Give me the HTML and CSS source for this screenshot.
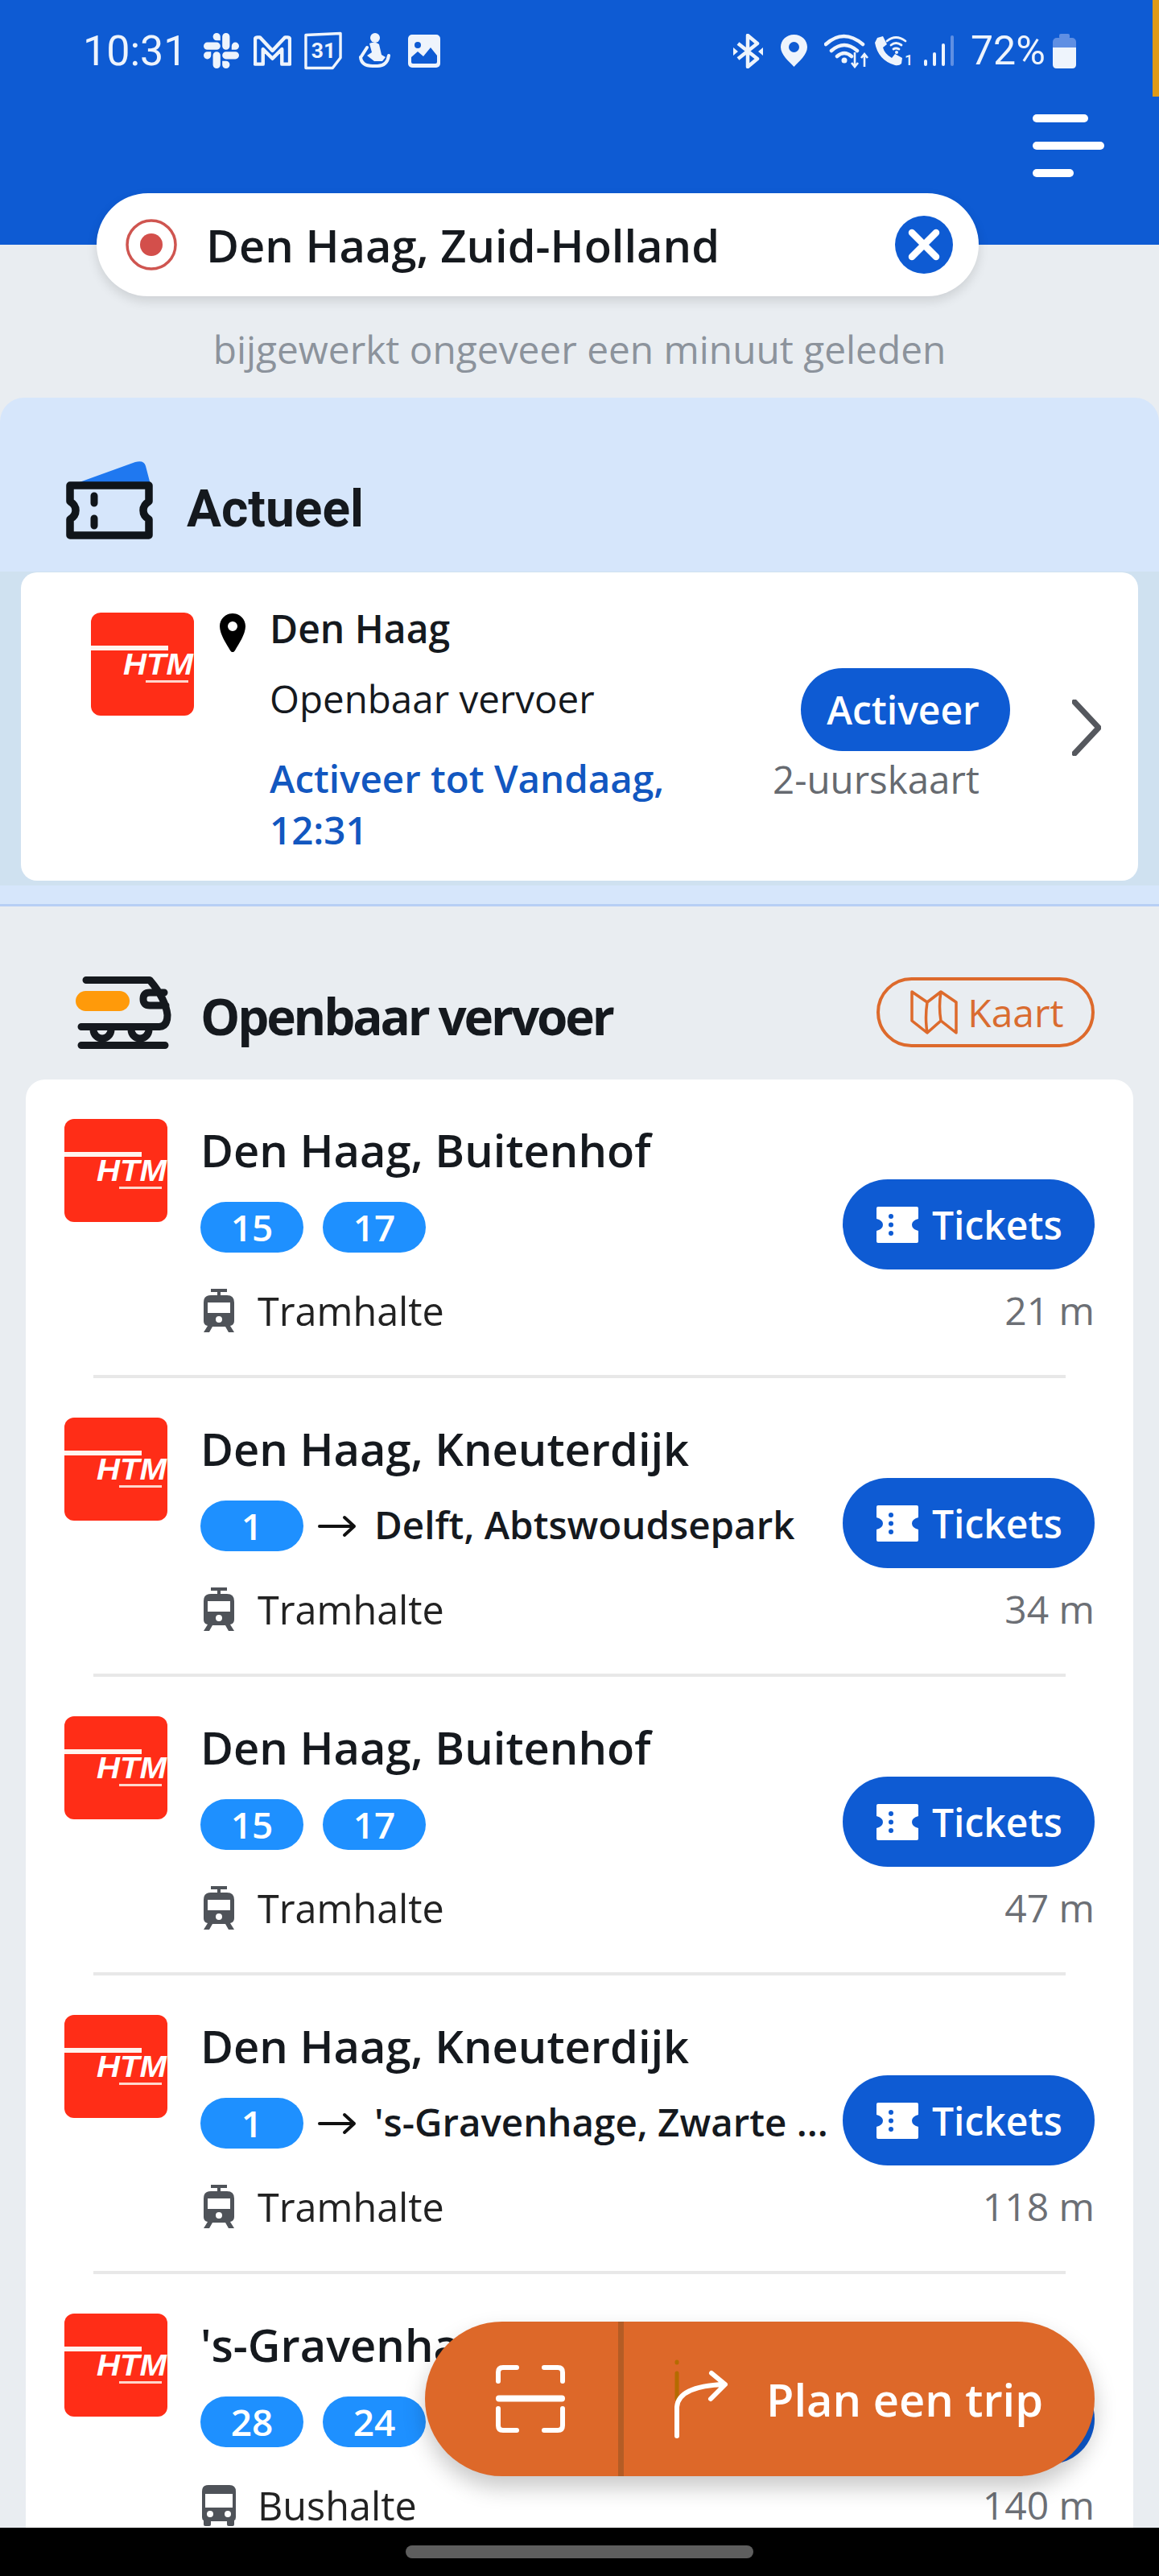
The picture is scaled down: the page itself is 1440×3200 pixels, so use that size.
FILE: index.html
```html
<!DOCTYPE html>
<html>
<head>
    <title>Reisplanner</title>
    <link rel="stylesheet" href="styles.css">
</head>
<body>
<div class="phone">
    <div class="corner-stripe"></div>

    <div class="screen">
        <div class="header">
            <div class="status-bar">
                <span class="status-time">10:31</span>
                <svg class="ic-slack" viewBox="0 0 24 24"><path fill="#eef4fc" d="M5.042 15.165a2.528 2.528 0 0 1-2.52 2.523A2.528 2.528 0 0 1 0 15.165a2.527 2.527 0 0 1 2.522-2.52h2.52v2.52zM6.313 15.165a2.527 2.527 0 0 1 2.521-2.52 2.527 2.527 0 0 1 2.521 2.52v6.313A2.528 2.528 0 0 1 8.834 24a2.528 2.528 0 0 1-2.521-2.522v-6.313zM8.834 5.042a2.528 2.528 0 0 1-2.521-2.52A2.528 2.528 0 0 1 8.834 0a2.528 2.528 0 0 1 2.521 2.522v2.52H8.834zM8.834 6.313a2.528 2.528 0 0 1 2.521 2.521 2.528 2.528 0 0 1-2.521 2.521H2.522A2.528 2.528 0 0 1 0 8.834a2.528 2.528 0 0 1 2.522-2.521h6.312zM18.956 8.834a2.528 2.528 0 0 1 2.522-2.521A2.528 2.528 0 0 1 24 8.834a2.528 2.528 0 0 1-2.522 2.521h-2.522V8.834zM17.688 8.834a2.528 2.528 0 0 1-2.523 2.521 2.527 2.527 0 0 1-2.52-2.521V2.522A2.527 2.527 0 0 1 15.165 0a2.528 2.528 0 0 1 2.523 2.522v6.312zM15.165 18.956a2.528 2.528 0 0 1 2.523 2.522A2.528 2.528 0 0 1 15.165 24a2.527 2.527 0 0 1-2.52-2.522v-2.522h2.52zM15.165 17.688a2.527 2.527 0 0 1-2.52-2.523 2.526 2.526 0 0 1 2.52-2.52h6.313A2.527 2.527 0 0 1 24 15.165a2.528 2.528 0 0 1-2.522 2.523h-6.313z"/></svg>
                <svg class="ic-gmail" viewBox="0 0 48 38"><path fill="none" stroke="#eef4fc" stroke-width="4.5" stroke-linejoin="round" d="M2 36V5Q2 2 5 2H8L24 19 40 2H43Q46 2 46 5V36H36V17L24 29 12 17V36Z"/></svg>
                <svg class="ic-cal" viewBox="0 0 48 48">
                    <path fill="none" stroke="#eef4fc" stroke-width="3.5" stroke-linejoin="round" d="M2 4 46 2V33L36 46H2Z"/>
                    <text x="9" y="33" class="cal-text">31</text>
                </svg>
                <svg class="ic-figure" viewBox="0 0 40 44">
                    <circle cx="21" cy="6" r="6" fill="#eef4fc"/>
                    <path fill="#eef4fc" d="M14 13Q21 10 26 14L29 27 34 30 30 35H20L11 28 17 24Z"/>
                    <path fill="none" stroke="#eef4fc" stroke-width="4" stroke-linecap="round" d="M3 30Q4 41 18 41H24Q36 41 38 28M11 18 4 29"/>
                </svg>
                <svg class="ic-image" viewBox="0 0 40 41">
                    <rect width="40" height="41" rx="5" fill="#eef4fc"/>
                    <circle cx="12" cy="13" r="4" fill="#0e5bd3"/>
                    <path fill="#0e5bd3" d="M4 34V28L12 21 19 27 28 16 36 26V34Q36 36 34 36H6Q4 36 4 34Z"/>
                </svg>
                <span class="status-gap"></span>
                <svg class="ic-bt" viewBox="0 0 37 43">
                    <path fill="none" stroke="#eef4fc" stroke-width="4.5" stroke-linejoin="round" d="M6 12 30 31 18 41V2L30 12 6 31"/>
                    <path fill="#eef4fc" d="M0 17 6 22 0 27ZM37 17 31 22 37 27Z"/>
                </svg>
                <svg class="ic-status-pin" viewBox="0 0 33 40"><path fill="#eef4fc" fill-rule="evenodd" d="M16.500 0C7 0 0 7 0 15.500 0 25 10 33 16.500 40 23 33 33 25 33 15.500 33 7 26 0 16.500 0ZM16.500 9A6.500 6.500 0 1 1 16.500 22 6.500 6.500 0 1 1 16.500 9Z"/></svg>
                <svg class="ic-wifi" viewBox="0 0 58 44">
                    <path fill="none" stroke="#eef4fc" stroke-width="4.500" stroke-linecap="round" d="M2 14Q24-6 48 14M9 22Q25 8 41 22M16 29Q25 21 34 29"/>
                    <circle cx="25" cy="34" r="3.500" fill="#eef4fc"/>
                    <path fill="none" stroke="#eef4fc" stroke-width="2.600" d="M38 24V42M34 37 38 42 42 37M50 42V26M46 31 50 26 54 31"/>
                </svg>
                <svg class="ic-call" viewBox="0 0 48 37">
                    <path fill="#eef4fc" d="M3 2 10 0 15 10 10 14Q12 22 21 27L25 22 34 27 33 34Q30 37 25 36 4 30 0 8Z"/>
                    <path fill="none" stroke="#eef4fc" stroke-width="2.800" stroke-linecap="round" d="M15 6Q26-3 38 6M20 11Q26 6 33 11M23 16Q26 14 30 16"/>
                    <circle cx="27" cy="20" r="2" fill="#eef4fc"/>
                    <text x="37" y="36" class="call-sim">1</text>
                </svg>
                <svg class="ic-signal" viewBox="0 0 37 38">
                    <rect x="0" y="30" width="4" height="8" rx="2" fill="#eef4fc"/>
                    <rect x="11" y="21" width="4" height="17" rx="2" fill="#eef4fc"/>
                    <rect x="22" y="10" width="4" height="28" rx="2" fill="#eef4fc"/>
                    <rect x="33" y="0" width="4" height="38" rx="2" fill="#5f8fe3"/>
                </svg>
                <span class="status-battery">72%</span>
                <svg class="ic-battery" viewBox="0 0 29 43">
                    <rect x="8" y="0" width="13" height="6" rx="2" fill="#5f8fe3"/>
                    <rect x="0" y="5" width="29" height="38" rx="5" fill="#5f8fe3"/>
                    <path fill="#eef4fc" d="M0 17H29V38Q29 43 24 43H5Q0 43 0 38Z"/>
                </svg>
            </div>
            <div class="menu-row">
                <div class="menu">
                    <span class="menu-bar menu-bar-mid"></span>
                    <span class="menu-bar menu-bar-long"></span>
                    <span class="menu-bar menu-bar-short"></span>
                </div>
            </div>
        </div>

        <div class="search">
            <svg class="ic-target" viewBox="0 0 64 64">
                <circle cx="32" cy="32" r="30" fill="none" stroke="#cf5550" stroke-width="3.5"/>
                <circle cx="32" cy="32" r="14" fill="#d34f4b"/>
            </svg>
            <span class="search-text">Den Haag, Zuid-Holland</span>
            <svg class="ic-clear" viewBox="0 0 72 72">
                <circle cx="36" cy="36" r="36" fill="#0e5bd3"/>
                <path fill="none" stroke="#fff" stroke-width="8.5" stroke-linecap="round" d="M21 21 51 51M51 21 21 51"/>
            </svg>
        </div>
        <div class="updated">bijgewerkt ongeveer een minuut geleden</div>

        <div class="active">
            <div class="active-head">
                <svg class="ic-ticket" viewBox="0 0 108 97">
                    <path fill="#1f78f0" d="M14 27 86 1Q97-2 99 6L105 29Z"/>
                    <path fill="#d6e6fb" stroke="#10151a" stroke-width="9.500" stroke-linejoin="round" d="M5 30H103V50Q96 54 96 61 96 68 103 72V92H5V72Q12 68 12 61 12 54 5 50Z"/>
                    <path fill="none" stroke="#10151a" stroke-width="9" stroke-linecap="round" d="M35 43V52M35 71V80"/>
                </svg>
                <h2 class="active-title">Actueel</h2>
            </div>
            <div class="active-body">
                <div class="active-card">
                    <svg class="logo logo-active" viewBox="0 0 128 128">
                        <rect width="128" height="128" rx="12" fill="#ff2d17"/>
                        <rect y="41" width="96" height="6" fill="#fff4ee"/>
                        <text x="40" y="77" class="logo-text" textLength="87" lengthAdjust="spacingAndGlyphs">HTM</text>
                        <rect x="68" y="84" width="53" height="3" fill="#ffd6cc"/>
                    </svg>
                    <svg class="ic-pin" viewBox="0 0 32 48"><path fill="#000" fill-rule="evenodd" d="M16 0C7 0 0 7 0 16 0 26 9 39 13 46 15 49 17 49 19 46 23 39 32 26 32 16 32 7 25 0 16 0ZM16 10A6 6 0 1 1 16 22 6 6 0 1 1 16 10Z"/></svg>
                    <div class="active-text">
                        <div class="active-place">Den Haag</div>
                        <div class="active-kind">Openbaar vervoer</div>
                        <div class="active-until">Activeer tot Vandaag,<br>12:31</div>
                    </div>
                    <div class="active-action">
                        <div class="btn-activate">Activeer</div>
                        <div class="active-ticket">2-uurskaart</div>
                    </div>
                    <svg class="ic-chevron" viewBox="0 0 36 70"><path fill="none" stroke="#55585e" stroke-width="7" stroke-linecap="round" stroke-linejoin="round" d="M3 3 33 35 3 67"/></svg>
                </div>
            </div>
        </div>

        <div class="transit-head">
            <svg class="ic-train" viewBox="0 0 119 90">
                <path fill="none" stroke="#15191e" stroke-width="9" stroke-linecap="round" stroke-linejoin="round" d="M13 4.500H92Q112 28 114 48 114 62 104 62.500H7M110 20H92Q84 20 84 28 84 36 92 36H112M22 66A11 11 0 0 0 44 66M69 66A11 11 0 0 0 91 66M7 85.500H111"/>
                <rect y="18" width="67" height="25" rx="12.500" fill="#ff9a0a"/>
            </svg>
            <h2 class="transit-title">Openbaar vervoer</h2>
            <div class="btn-map">
                <svg class="ic-map" viewBox="0 0 59 55"><path fill="none" stroke="#dd6a2c" stroke-width="3.5" stroke-linejoin="round" d="M2 2 21 15 38 2 57 15V53L38 38 21 53 2 38ZM21 15Q18 34 21 53M38 2Q35 20 38 38"/></svg>
                <span>Kaart</span>
            </div>
        </div>

        <div class="stops">
            <div class="stop">
                <svg class="logo" viewBox="0 0 128 128">
                    <rect width="128" height="128" rx="12" fill="#ff2d17"/>
                    <rect y="41" width="96" height="6" fill="#fff4ee"/>
                    <text x="40" y="77" class="logo-text" textLength="87" lengthAdjust="spacingAndGlyphs">HTM</text>
                    <rect x="68" y="84" width="53" height="3" fill="#ffd6cc"/>
                </svg>
                <div class="stop-main">
                    <div class="stop-name">Den Haag, Buitenhof</div>
                    <div class="stop-lines">
                        <span class="line-pill">15</span>
                        <span class="line-pill">17</span>
                    </div>
                    <div class="stop-type">
                        <svg class="ic-tram" viewBox="0 0 38 54"><path fill="#4f5359" fill-rule="evenodd" d="M9 0H29V4H21V8H29Q38 8 38 17V40Q38 45 33 46L38 54H31L27 47H11L7 54H0L5 46Q0 45 0 40V17Q0 8 9 8H17V4H9ZM5 17V30H33V17ZM19 34A4 4 0 1 0 19 42 4 4 0 1 0 19 34Z"/></svg>
                        <span>Tramhalte</span>
                    </div>
                </div>
                <div class="stop-side">
                    <div class="btn-tickets">
                        <svg class="ic-mini-ticket" viewBox="0 0 52 45"><path fill="#fff" d="M0 2Q0 0 2 0H50Q52 0 52 2V15Q44 17 44 22.500 44 28 52 30V43Q52 45 50 45H2Q0 45 0 43V30Q8 28 8 22.500 8 17 0 15Z"/><circle cx="18" cy="12" r="3" fill="#0e5bd3"/><circle cx="18" cy="22.500" r="3" fill="#0e5bd3"/><circle cx="18" cy="33" r="3" fill="#0e5bd3"/></svg>
                        <span>Tickets</span>
                    </div>
                    <div class="stop-dist">21 m</div>
                </div>
            </div>
            <hr class="divider">
            <div class="stop">
                <svg class="logo" viewBox="0 0 128 128">
                    <rect width="128" height="128" rx="12" fill="#ff2d17"/>
                    <rect y="41" width="96" height="6" fill="#fff4ee"/>
                    <text x="40" y="77" class="logo-text" textLength="87" lengthAdjust="spacingAndGlyphs">HTM</text>
                    <rect x="68" y="84" width="53" height="3" fill="#ffd6cc"/>
                </svg>
                <div class="stop-main">
                    <div class="stop-name">Den Haag, Kneuterdijk</div>
                    <div class="stop-lines">
                        <span class="line-pill">1</span>
                        <svg class="ic-arrow" viewBox="0 0 48 30"><path fill="none" stroke="#111" stroke-width="4" stroke-linecap="round" stroke-linejoin="round" d="M2 15H45M33 4 45 15 33 26"/></svg>
                        <span class="line-dest">Delft, Abtswoudsepark</span>
                    </div>
                    <div class="stop-type">
                        <svg class="ic-tram" viewBox="0 0 38 54"><path fill="#4f5359" fill-rule="evenodd" d="M9 0H29V4H21V8H29Q38 8 38 17V40Q38 45 33 46L38 54H31L27 47H11L7 54H0L5 46Q0 45 0 40V17Q0 8 9 8H17V4H9ZM5 17V30H33V17ZM19 34A4 4 0 1 0 19 42 4 4 0 1 0 19 34Z"/></svg>
                        <span>Tramhalte</span>
                    </div>
                </div>
                <div class="stop-side">
                    <div class="btn-tickets">
                        <svg class="ic-mini-ticket" viewBox="0 0 52 45"><path fill="#fff" d="M0 2Q0 0 2 0H50Q52 0 52 2V15Q44 17 44 22.500 44 28 52 30V43Q52 45 50 45H2Q0 45 0 43V30Q8 28 8 22.500 8 17 0 15Z"/><circle cx="18" cy="12" r="3" fill="#0e5bd3"/><circle cx="18" cy="22.500" r="3" fill="#0e5bd3"/><circle cx="18" cy="33" r="3" fill="#0e5bd3"/></svg>
                        <span>Tickets</span>
                    </div>
                    <div class="stop-dist">34 m</div>
                </div>
            </div>
            <hr class="divider">
            <div class="stop">
                <svg class="logo" viewBox="0 0 128 128">
                    <rect width="128" height="128" rx="12" fill="#ff2d17"/>
                    <rect y="41" width="96" height="6" fill="#fff4ee"/>
                    <text x="40" y="77" class="logo-text" textLength="87" lengthAdjust="spacingAndGlyphs">HTM</text>
                    <rect x="68" y="84" width="53" height="3" fill="#ffd6cc"/>
                </svg>
                <div class="stop-main">
                    <div class="stop-name">Den Haag, Buitenhof</div>
                    <div class="stop-lines">
                        <span class="line-pill">15</span>
                        <span class="line-pill">17</span>
                    </div>
                    <div class="stop-type">
                        <svg class="ic-tram" viewBox="0 0 38 54"><path fill="#4f5359" fill-rule="evenodd" d="M9 0H29V4H21V8H29Q38 8 38 17V40Q38 45 33 46L38 54H31L27 47H11L7 54H0L5 46Q0 45 0 40V17Q0 8 9 8H17V4H9ZM5 17V30H33V17ZM19 34A4 4 0 1 0 19 42 4 4 0 1 0 19 34Z"/></svg>
                        <span>Tramhalte</span>
                    </div>
                </div>
                <div class="stop-side">
                    <div class="btn-tickets">
                        <svg class="ic-mini-ticket" viewBox="0 0 52 45"><path fill="#fff" d="M0 2Q0 0 2 0H50Q52 0 52 2V15Q44 17 44 22.500 44 28 52 30V43Q52 45 50 45H2Q0 45 0 43V30Q8 28 8 22.500 8 17 0 15Z"/><circle cx="18" cy="12" r="3" fill="#0e5bd3"/><circle cx="18" cy="22.500" r="3" fill="#0e5bd3"/><circle cx="18" cy="33" r="3" fill="#0e5bd3"/></svg>
                        <span>Tickets</span>
                    </div>
                    <div class="stop-dist">47 m</div>
                </div>
            </div>
            <hr class="divider">
            <div class="stop">
                <svg class="logo" viewBox="0 0 128 128">
                    <rect width="128" height="128" rx="12" fill="#ff2d17"/>
                    <rect y="41" width="96" height="6" fill="#fff4ee"/>
                    <text x="40" y="77" class="logo-text" textLength="87" lengthAdjust="spacingAndGlyphs">HTM</text>
                    <rect x="68" y="84" width="53" height="3" fill="#ffd6cc"/>
                </svg>
                <div class="stop-main">
                    <div class="stop-name">Den Haag, Kneuterdijk</div>
                    <div class="stop-lines">
                        <span class="line-pill">1</span>
                        <svg class="ic-arrow" viewBox="0 0 48 30"><path fill="none" stroke="#111" stroke-width="4" stroke-linecap="round" stroke-linejoin="round" d="M2 15H45M33 4 45 15 33 26"/></svg>
                        <span class="line-dest">'s-Gravenhage, Zwarte ...</span>
                    </div>
                    <div class="stop-type">
                        <svg class="ic-tram" viewBox="0 0 38 54"><path fill="#4f5359" fill-rule="evenodd" d="M9 0H29V4H21V8H29Q38 8 38 17V40Q38 45 33 46L38 54H31L27 47H11L7 54H0L5 46Q0 45 0 40V17Q0 8 9 8H17V4H9ZM5 17V30H33V17ZM19 34A4 4 0 1 0 19 42 4 4 0 1 0 19 34Z"/></svg>
                        <span>Tramhalte</span>
                    </div>
                </div>
                <div class="stop-side">
                    <div class="btn-tickets">
                        <svg class="ic-mini-ticket" viewBox="0 0 52 45"><path fill="#fff" d="M0 2Q0 0 2 0H50Q52 0 52 2V15Q44 17 44 22.500 44 28 52 30V43Q52 45 50 45H2Q0 45 0 43V30Q8 28 8 22.500 8 17 0 15Z"/><circle cx="18" cy="12" r="3" fill="#0e5bd3"/><circle cx="18" cy="22.500" r="3" fill="#0e5bd3"/><circle cx="18" cy="33" r="3" fill="#0e5bd3"/></svg>
                        <span>Tickets</span>
                    </div>
                    <div class="stop-dist">118 m</div>
                </div>
            </div>
            <hr class="divider">
            <div class="stop">
                <svg class="logo" viewBox="0 0 128 128">
                    <rect width="128" height="128" rx="12" fill="#ff2d17"/>
                    <rect y="41" width="96" height="6" fill="#fff4ee"/>
                    <text x="40" y="77" class="logo-text" textLength="87" lengthAdjust="spacingAndGlyphs">HTM</text>
                    <rect x="68" y="84" width="53" height="3" fill="#ffd6cc"/>
                </svg>
                <div class="stop-main">
                    <div class="stop-name">'s-Gravenhage</div>
                    <div class="stop-lines">
                        <span class="line-pill">28</span>
                        <span class="line-pill">24</span>
                    </div>
                    <div class="stop-type">
                        <svg class="ic-bus" viewBox="0 0 42 51"><path fill="#4f5359" fill-rule="evenodd" d="M8 0H34Q42 0 42 8V40Q42 43 40 44V49Q40 51 38 51H33Q31 51 31 49V45H11V49Q11 51 9 51H4Q2 51 2 49V44Q0 43 0 40V8Q0 0 8 0ZM4 11V28H38V11ZM10 32A4 4 0 1 0 10 40 4 4 0 1 0 10 32ZM32 32A4 4 0 1 0 32 40 4 4 0 1 0 32 32Z"/></svg>
                        <span>Bushalte</span>
                    </div>
                </div>
                <div class="stop-side">
                    <div class="btn-tickets btn-tickets-covered"></div>
                    <div class="stop-dist">140 m</div>
                </div>
            </div>
        </div>
    </div>

    <div class="fab">
        <div class="fab-scan">
            <svg class="ic-scan" viewBox="0 0 86 84"><path fill="none" stroke="#fff" stroke-width="6" stroke-linecap="round" d="M3 20V9Q3 3 9 3H26M60 3H77Q83 3 83 9V20M3 54V75Q3 81 9 81H26M60 81H77Q83 81 83 75V54"/><path fill="none" stroke="#fff" stroke-width="8" stroke-linecap="round" d="M4 41.500H82"/></svg>
        </div>
        <div class="fab-plan">
            <svg class="ic-route" viewBox="0 0 70 100">
                <path fill="none" stroke="#b56b00" stroke-width="5" stroke-linecap="round" d="M5 4V5M5 18V50"/>
                <path fill="none" stroke="#fff" stroke-width="6" stroke-linecap="round" stroke-linejoin="round" d="M5 96V60Q7 34 64 32M48 18 65 32 47 50"/>
            </svg>
            <span>Plan een trip</span>
        </div>
    </div>

    <div class="nav-bar"><div class="nav-handle"></div></div>
</div>
</body>
</html>
```

FILE: styles.css
```css
* {
    box-sizing: border-box;
}

body {
    margin: 0;
    font-family: "Open Sans", sans-serif;
    color: #15191e;
}

svg {
    display: block;
    flex-shrink: 0;
}

.phone {
    position: relative;
    width: 1440px;
    height: 3200px;
    display: flex;
    flex-direction: column;
    overflow: hidden;
    background: #e9edf1;
}

.corner-stripe {
    position: absolute;
    top: 0;
    right: 0;
    width: 8px;
    height: 120px;
    background: #e09a17;
}

.screen {
    flex: 1;
    min-height: 0;
    overflow: hidden;
}

/* header */
.header {
    height: 304px;
    background: #0e5bd3;
}

.status-bar {
    height: 126px;
    display: flex;
    align-items: center;
    padding-left: 103px;
    color: #eef4fc;
    font-family: Roboto, sans-serif;
    font-size: 50px;
}

.status-time {
    width: 150px;
    font-size: 52px;
}

.ic-slack { width: 44px; height: 44px; }
.ic-gmail { width: 47px; height: 38px; margin-left: 18px; }
.ic-cal { width: 47px; height: 48px; margin-left: 16px; }
.ic-figure { width: 40px; height: 44px; margin-left: 20px; }
.ic-image { width: 40px; height: 41px; margin-left: 22px; }
.status-gap { width: 364px; }
.ic-bt { width: 37px; height: 43px; }
.ic-status-pin { width: 33px; height: 40px; margin-left: 22px; }
.ic-wifi { width: 58px; height: 44px; margin-left: 21px; }
.ic-call { width: 48px; height: 37px; margin-left: 5px; overflow: visible; }
.ic-signal { width: 37px; height: 38px; margin-left: 13px; }
.ic-battery { width: 29px; height: 43px; margin-left: 7px; }

.status-battery {
    margin-left: 21px;
    width: 95px;
}

.cal-text {
    font-family: Roboto, sans-serif;
    font-size: 27px;
    font-weight: 700;
    fill: #eef4fc;
}

.call-sim {
    font-family: Roboto, sans-serif;
    font-size: 18px;
    font-weight: 500;
    fill: #eef4fc;
}

.menu-row {
    display: flex;
    justify-content: flex-end;
    padding: 16px 68px 0 0;
}

.menu {
    width: 89px;
    display: flex;
    flex-direction: column;
    gap: 24px;
}

.menu-bar {
    display: block;
    height: 10px;
    border-radius: 5px;
    background: #fff;
}

.menu-bar-long { width: 89px; }
.menu-bar-mid { width: 69px; }
.menu-bar-short { width: 51px; }

/* search */
.search {
    width: 1096px;
    height: 128px;
    margin: -64px 0 0 120px;
    padding: 0 32px 0 36px;
    display: flex;
    align-items: center;
    border-radius: 64px;
    background: #fff;
    box-shadow: 0 6px 14px rgba(0, 0, 0, 0.12);
}

.ic-target {
    width: 64px;
    height: 64px;
}

.search-text {
    flex: 1;
    margin-left: 36px;
    font-size: 56px;
    font-weight: 600;
}

.ic-clear {
    width: 72px;
    height: 72px;
}

.updated {
    margin-top: 34px;
    line-height: 64px;
    text-align: center;
    font-size: 47.8px;
    color: #8c939c;
}

/* actueel */
.active {
    margin-top: 28px;
    padding-bottom: 23px;
    border-bottom: 3px solid #b7cff5;
    border-radius: 30px 30px 0 0;
    background: #d6e6fb;
}

.active-head {
    height: 216px;
    padding: 79px 0 0 82px;
    display: flex;
    align-items: flex-start;
}

.active-title {
    margin: 0 0 0 42px;
    padding-top: 20px;
    font-family: Roboto, sans-serif;
    font-size: 64px;
    font-weight: 700;
    line-height: 80px;
}

.ic-ticket {
    width: 108px;
    height: 97px;
}

.active-body {
    padding: 1px 26px 6px;
    background: #cfe1f0;
}

.active-card {
    height: 383px;
    display: flex;
    align-items: flex-start;
    border-radius: 20px;
    background: #fff;
}

.logo {
    width: 128px;
    height: 128px;
}

.logo-active {
    margin: 50px 0 0 87px;
}

.logo-text {
    font-family: "Liberation Sans", sans-serif;
    font-size: 37px;
    font-style: italic;
    font-weight: 700;
    fill: #fff;
}

.ic-pin {
    width: 32px;
    height: 48px;
    margin: 51px 0 0 32px;
}

.active-text {
    width: 625px;
    margin: 38px 0 0 30px;
    font-size: 48px;
    line-height: 64px;
}

.active-place {
    font-weight: 600;
}

.active-kind {
    margin-top: 23px;
    font-size: 47.5px;
}

.active-until {
    margin-top: 35px;
    font-size: 47.5px;
    font-weight: 600;
    color: #1257c0;
}

.active-action {
    width: 295px;
    margin-top: 119px;
    display: flex;
    flex-direction: column;
    align-items: flex-end;
}

.btn-activate {
    width: 260px;
    height: 103px;
    padding-right: 6px;
    display: flex;
    align-items: center;
    justify-content: center;
    border-radius: 52px;
    background: #0e5bd3;
    color: #fff;
    font-size: 48px;
    font-weight: 600;
}

.active-ticket {
    width: 100%;
    margin-top: 3px;
    margin-left: -6px;
    font-size: 47.5px;
    line-height: 64px;
    color: #666a70;
}

.ic-chevron {
    width: 36px;
    height: 70px;
    margin: 158px 0 0 77px;
}

/* openbaar vervoer */
.transit-head {
    height: 215px;
    padding: 88px 80px 40px 94px;
    display: flex;
    align-items: center;
}

.ic-train {
    width: 119px;
    height: 90px;
}

.transit-title {
    flex: 1;
    margin: 8px 0 0 36px;
    font-size: 62px;
    font-weight: 700;
    line-height: 70px;
    letter-spacing: -3.2px;
}

.btn-map {
    width: 271px;
    height: 87px;
    padding-left: 4px;
    display: flex;
    align-items: center;
    justify-content: center;
    gap: 12px;
    border: 4px solid #dd6a2c;
    border-radius: 44px;
    color: #d96c30;
    font-size: 48px;
}

.ic-map {
    width: 59px;
    height: 55px;
}

.stops {
    width: 1376px;
    margin-left: 32px;
    border-radius: 24px 24px 0 0;
    background: #fff;
}

.stop {
    height: 367px;
    padding: 49px 48px 0;
    display: flex;
    align-items: flex-start;
}

.divider {
    height: 4px;
    margin: 0 84px;
    border: 0;
    background: #e8e8e8;
}

.stop-main {
    flex: 1;
    min-width: 0;
    margin-left: 41px;
}

.stop-name {
    margin-top: 2px;
    font-size: 56px;
    font-weight: 600;
    line-height: 72px;
    white-space: nowrap;
}

.stop-lines {
    height: 63px;
    margin-top: 29px;
    display: flex;
    align-items: center;
    gap: 24px;
}

.line-pill {
    width: 128px;
    height: 63px;
    padding-bottom: 2px;
    display: flex;
    align-items: center;
    justify-content: center;
    border-radius: 32px;
    background: #1e90ff;
    color: #fff;
    font-size: 46px;
    font-weight: 600;
}

.ic-arrow {
    width: 48px;
    height: 30px;
    margin-left: -6px;
}

.line-dest {
    margin: 0 0 5px -2px;
    font-size: 47.5px;
    font-weight: 600;
    white-space: nowrap;
}

.stop-type {
    height: 64px;
    margin-top: 40px;
    display: flex;
    align-items: center;
    font-size: 48.5px;
    color: #222;
}

.ic-tram {
    width: 38px;
    height: 54px;
    margin: 0 29px 0 4px;
}

.ic-bus {
    width: 42px;
    height: 51px;
    margin: 0 27px 0 2px;
}

.stop-side {
    margin-top: 75px;
    display: flex;
    flex-direction: column;
    align-items: flex-end;
}

.btn-tickets {
    width: 313px;
    height: 112px;
    padding-left: 42px;
    display: flex;
    align-items: center;
    gap: 17px;
    border-radius: 56px;
    background: #0e5bd3;
    color: #fff;
    font-size: 48px;
    font-weight: 600;
}

.ic-mini-ticket {
    width: 52px;
    height: 45px;
}

.stop-dist {
    margin-top: 19px;
    font-size: 48px;
    line-height: 64px;
    color: #6c6f75;
}

/* floating button */
.fab {
    position: absolute;
    left: 528px;
    top: 2884px;
    width: 832px;
    height: 192px;
    display: flex;
    border-radius: 96px;
    background: #dd6829;
    box-shadow: 0 14px 28px rgba(0, 0, 0, 0.22);
    color: #fff;
}

.fab-scan {
    width: 247px;
    padding-left: 88px;
    display: flex;
    align-items: center;
    border-right: 7px solid #b45c25;
}

.ic-scan {
    width: 86px;
    height: 84px;
}

.fab-plan {
    flex: 1;
    padding-left: 61px;
    display: flex;
    align-items: center;
    gap: 46px;
    font-size: 56px;
    font-weight: 600;
}

.ic-route {
    width: 70px;
    height: 100px;
}

.nav-bar {
    height: 60px;
    padding-top: 22px;
    background: #000;
}

.nav-handle {
    width: 432px;
    height: 16px;
    margin-left: 504px;
    border-radius: 8px;
    background: #5e5e5e;
}
```
